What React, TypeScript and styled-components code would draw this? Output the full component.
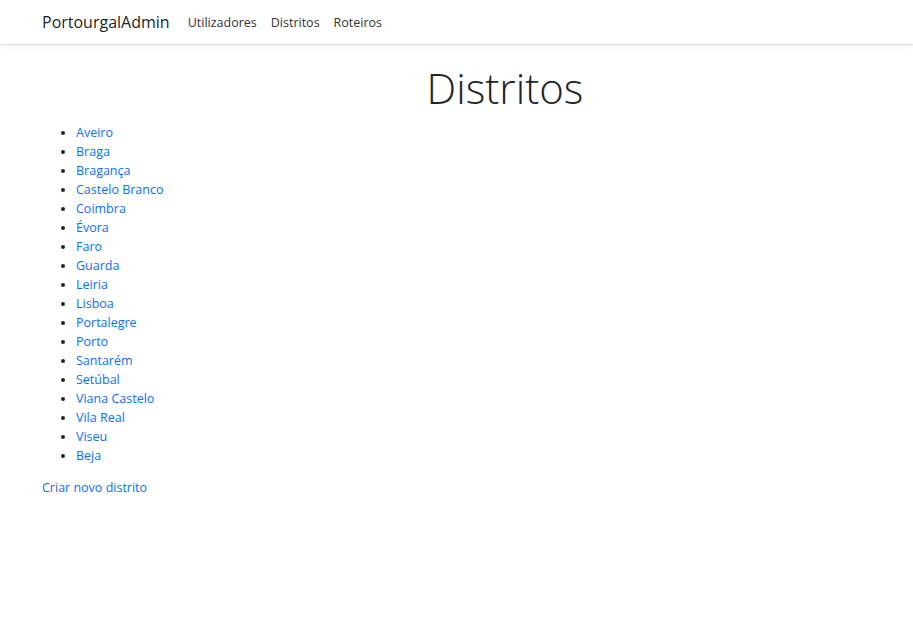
import React from 'react';
import styled, { createGlobalStyle } from 'styled-components';

const GlobalStyle = createGlobalStyle`
  body {
    margin: 0;
    font-family: "Open Sans", "Liberation Sans", sans-serif;
    font-size: 12.5px;
    line-height: 19px;
    color: #212529;
    background: #fff;
  }
`;

const Navbar = styled.nav`
  display: flex;
  align-items: center;
  height: 44px;
  padding: 0 42px;
  border-bottom: 1px solid #dee2e6;
  box-shadow: 0 2px 4px rgba(0, 0, 0, 0.05);
  margin-bottom: 14px;
`;

const Brand = styled.a`
  font-size: 16px;
  color: rgba(0, 0, 0, 0.9);
  text-decoration: none;
  margin-right: 18px;
`;

const NavList = styled.div`
  display: flex;
  gap: 14px;
`;

const NavLink = styled.a`
  font-size: 12.5px;
  color: #333;
  text-decoration: none;
`;

const Main = styled.main`
  padding: 0 42px;
`;

const Title = styled.h1`
  margin: 0 0 6px;
  padding-left: 97px;
  text-align: center;
  font-size: 42px;
  font-weight: 300;
  line-height: 58px;
`;

const DistrictList = styled.ul`
  margin: 0 0 13px;
  padding-left: 34px;
`;

const Link = styled.a`
  color: #0d6efd;
  text-decoration: none;
`;

const districts = [
  'Aveiro', 'Braga', 'Bragança', 'Castelo Branco', 'Coimbra', 'Évora', 'Faro',
  'Guarda', 'Leiria', 'Lisboa', 'Portalegre', 'Porto', 'Santarém', 'Setúbal',
  'Viana Castelo', 'Vila Real', 'Viseu', 'Beja',
];

const App = () => (
  <>
    <GlobalStyle />
    <Navbar>
      <Brand href="#">PortourgalAdmin</Brand>
      <NavList>
        <NavLink href="#">Utilizadores</NavLink>
        <NavLink href="#">Distritos</NavLink>
        <NavLink href="#">Roteiros</NavLink>
      </NavList>
    </Navbar>
    <Main>
      <Title>Distritos</Title>
      <DistrictList>
        {districts.map((d) => (
          <li key={d}>
            <Link href="#">{d}</Link>
          </li>
        ))}
      </DistrictList>
      <Link href="#">Criar novo distrito</Link>
    </Main>
  </>
);

export default App;
